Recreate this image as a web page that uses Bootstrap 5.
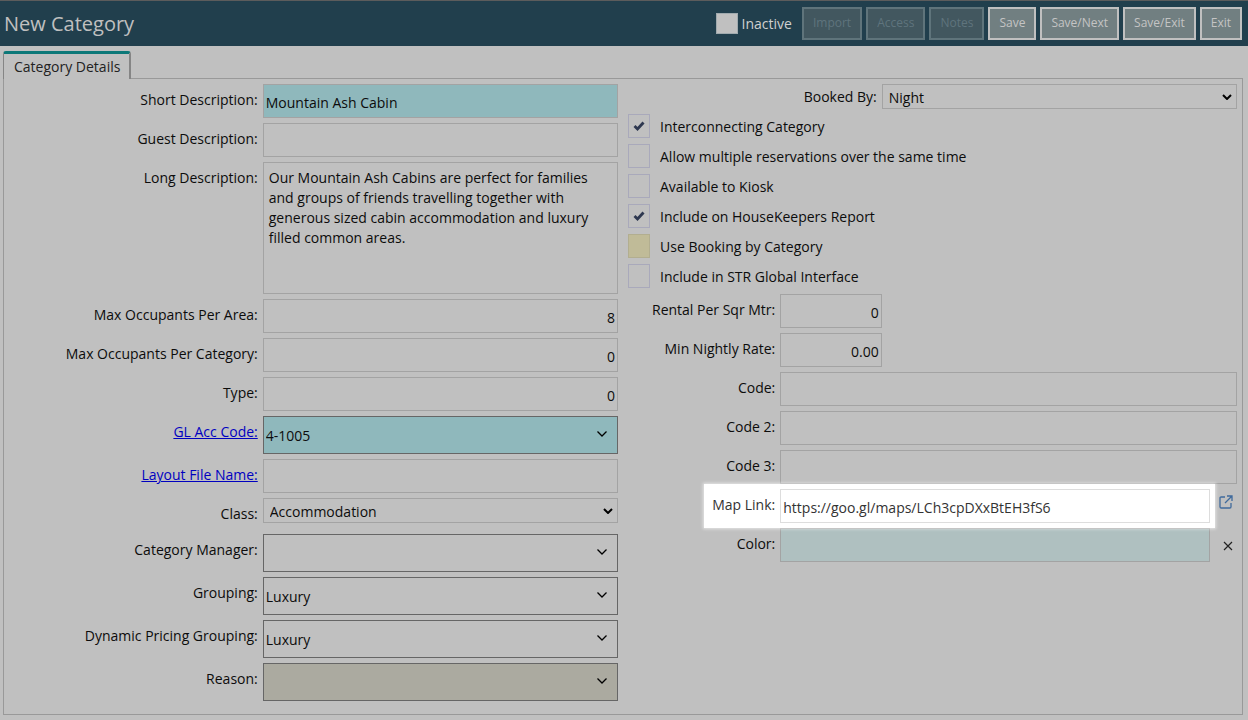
<!DOCTYPE html>
<html lang="en">
<head>
<meta charset="utf-8">
<meta name="viewport" content="width=device-width, initial-scale=1">
<title>New Category</title>
<link href="https://cdn.jsdelivr.net/npm/bootstrap@5.3.0/dist/css/bootstrap.min.css" rel="stylesheet">
<style>
  :root { --page: #c0c0c0; --line: #a3a3a3; --gap: 5px; }
  body { background: var(--page); color: #0c0c0c; font: 14px/20px "Open Sans", sans-serif; }
  a { color: #0000c0; }

  /* title bar */
  .titlebar { background: #213f4d; border-top: 1px solid #5c5c5c; color: var(--page); padding: 6px 6px 6px 4px; }
  .titlebar h1 { font-size: 20px; line-height: 32px; font-weight: 400; }
  .tool-group { gap: 4px; }
  .tool-label { margin-right: 6px; color: #d0d0d0; }
  .btn-tool { --bs-btn-font-size: 12px; --bs-btn-line-height: 16px; --bs-btn-padding-x: 9px; --bs-btn-padding-y: 6px;
    --bs-btn-border-width: 2px; --bs-btn-border-radius: 0; --bs-btn-color: #c4c4c4; --bs-btn-bg: #717f81; --bs-btn-border-color: #c0c0c0;
    --bs-btn-hover-color: #fff; --bs-btn-hover-bg: #7d8b8d; --bs-btn-hover-border-color: #d0d0d0;
    --bs-btn-disabled-color: #5f747d; --bs-btn-disabled-bg: #42575f; --bs-btn-disabled-border-color: #5f747b; --bs-btn-disabled-opacity: 1;
    padding-bottom: 7px; }

  /* tabs and pane */
  .tab-strip { padding: 5px 3px 0; --bs-nav-tabs-border-width: 0; }
  .tab-strip .nav-link.active { border: 1px solid #858585; border-width: 3px 2px 0 1px; border-top-color: #0c7878;
    border-radius: 3px 3px 0 0; background: var(--page); color: #222; padding: 3px 9px 2px 10px; margin-bottom: -1px; position: relative; z-index: 1; }
  .pane { margin: 0 5px 5px 3px; border: 1px solid #999; padding-bottom: 8px; }
  .stack { padding: var(--gap); gap: var(--gap); }

  /* fields */
  .field-label { padding: 6px 5px 0 0; text-align: right; }
  .form-control, .form-select { font-size: 14px; line-height: 20px; color: #0c0c0c; border: 1px solid var(--line); border-radius: 0; background-color: transparent; }
  .form-control { height: 34px; padding: 6px 2px; }
  input.form-control { padding: 7px 2px 5px; line-height: 18px; }
  textarea.form-control { height: 132px; padding: 5px; resize: none; }
  .form-select { height: 25px; padding: 3px 20px 0 6px; background-size: 10px 6px; background-position: right 4px top 9px;
    background-image: url("data:image/svg+xml,%3Csvg xmlns='http://www.w3.org/2000/svg' viewBox='0 0 10 6'%3E%3Cpath d='M1 1l4 4 4-4' fill='none' stroke='%23000' stroke-width='2'/%3E%3C/svg%3E"); }
  .combo { height: 38px; padding: 9px 30px 7px 2px; border-color: #666; background-position: right 10px top 14px;
    background-image: url("data:image/svg+xml,%3Csvg xmlns='http://www.w3.org/2000/svg' viewBox='0 0 10 6'%3E%3Cpath d='M.5.5L5 5 9.500.5' fill='none' stroke='%23000' stroke-width='1.300'/%3E%3C/svg%3E"); }
  .is-required { background-color: #8fb8bc; }
  .is-locked { background-color: #abaaa0; }
  .short-row { min-height: 31px; }

  /* tick boxes */
  .tick { appearance: none; flex: none; margin: 0; width: 22px; height: 24px; border: 1px solid #a9a9bb; background: center / 12px 10px no-repeat; }
  .tick:checked { background-image: url("data:image/svg+xml,%3Csvg xmlns='http://www.w3.org/2000/svg' viewBox='0 0 12 10'%3E%3Cpath d='M1.500 5L4.500 8 10.500 1.500' fill='none' stroke='%232e3850' stroke-width='2.800'/%3E%3C/svg%3E"); }
  .tick-khaki { background-color: #c0bb98; border-color: #b2ae90; }
  .tick-inactive { height: 21px; background-color: #c0c0c0; border-color: #a0aaae; }
  .tick-row { gap: 10px; padding-bottom: 1px; }
  .tick-row label { padding-top: 2px; }
  .tick-list { gap: var(--gap); }

  /* spotlighted row */
  .spot { position: relative; color: #333; }
  .spot::before { content: ""; position: absolute; inset: -5px 22px -5px 76px; background: #fff; box-shadow: 0 0 3px 1px rgba(255, 255, 255, .6); }
  .spot > * { position: relative; }
  .spot .form-control { border-color: #ddd; color: #333; }
  .swatch { background-color: #afc0c0; padding: 0; }
  .side-tool { width: 27px; height: 34px; flex: none; border: 0; background: none; padding: 0 0 0 8px; text-align: center; line-height: 1; }
  a.side-tool { padding: 5px 0 0 5px; }
</style>
</head>
<body>
<header class="titlebar d-flex align-items-center justify-content-between">
  <h1 class="m-0">New Category</h1>
  <div class="tool-group d-flex align-items-center">
    <input class="tick tick-inactive" type="checkbox" id="inactive">
    <label for="inactive" class="tool-label">Inactive</label>
    <button type="button" class="btn btn-tool" disabled>Import</button>
    <button type="button" class="btn btn-tool" disabled>Access</button>
    <button type="button" class="btn btn-tool" disabled>Notes</button>
    <button type="button" class="btn btn-tool">Save</button>
    <button type="button" class="btn btn-tool">Save/Next</button>
    <button type="button" class="btn btn-tool">Save/Exit</button>
    <button type="button" class="btn btn-tool">Exit</button>
  </div>
</header>

<ul class="nav nav-tabs tab-strip">
  <li class="nav-item"><a class="nav-link active" href="#details">Category Details</a></li>
</ul>

<main class="pane" id="details">
  <form class="row g-0">
    <div class="col-6 stack d-flex flex-column">
      <div class="row g-0"><label class="col-5 field-label" for="short">Short Description:</label><div class="col-7"><input class="form-control is-required" id="short" type="text" value="Mountain Ash Cabin"></div></div>
      <div class="row g-0"><label class="col-5 field-label" for="guest">Guest Description:</label><div class="col-7"><input class="form-control" id="guest" type="text"></div></div>
      <div class="row g-0"><label class="col-5 field-label" for="long">Long Description:</label><div class="col-7"><textarea class="form-control d-block" id="long">Our Mountain Ash Cabins are perfect for families and groups of friends travelling together with generous sized cabin accommodation and luxury filled common areas.</textarea></div></div>
      <div class="row g-0"><label class="col-5 field-label" for="maxarea">Max Occupants Per Area:</label><div class="col-7"><input class="form-control text-end" id="maxarea" type="text" value="8"></div></div>
      <div class="row g-0"><label class="col-5 field-label" for="maxcat">Max Occupants Per Category:</label><div class="col-7"><input class="form-control text-end" id="maxcat" type="text" value="0"></div></div>
      <div class="row g-0"><label class="col-5 field-label" for="type">Type:</label><div class="col-7"><input class="form-control text-end" id="type" type="text" value="0"></div></div>
      <div class="row g-0"><label class="col-5 field-label" for="gl"><a href="#gl">GL Acc Code:</a></label><div class="col-7"><select class="form-select combo is-required" id="gl"><option>4-1005</option></select></div></div>
      <div class="row g-0"><label class="col-5 field-label" for="layout"><a href="#layout">Layout File Name:</a></label><div class="col-7"><input class="form-control" id="layout" type="text"></div></div>
      <div class="row g-0 short-row"><label class="col-5 field-label" for="class">Class:</label><div class="col-7"><select class="form-select" id="class"><option>Accommodation</option></select></div></div>
      <div class="row g-0"><label class="col-5 field-label" for="manager">Category Manager:</label><div class="col-7"><select class="form-select combo" id="manager"><option></option></select></div></div>
      <div class="row g-0"><label class="col-5 field-label" for="grouping">Grouping:</label><div class="col-7"><select class="form-select combo" id="grouping"><option>Luxury</option></select></div></div>
      <div class="row g-0"><label class="col-5 field-label" for="dynamic">Dynamic Pricing Grouping:</label><div class="col-7"><select class="form-select combo" id="dynamic"><option>Luxury</option></select></div></div>
      <div class="row g-0"><label class="col-5 field-label" for="reason">Reason:</label><div class="col-7"><select class="form-select combo is-locked" id="reason"><option></option></select></div></div>
    </div>

    <div class="col-6 stack d-flex flex-column">
      <div class="row g-0 align-items-center"><label class="col-5 field-label pt-0" for="booked">Booked By:</label><div class="col-7"><select class="form-select" id="booked"><option>Night</option></select></div></div>
      <div class="tick-list d-flex flex-column">
        <div class="tick-row d-flex align-items-center"><input class="tick" type="checkbox" id="t1" checked><label for="t1">Interconnecting Category</label></div>
        <div class="tick-row d-flex align-items-center"><input class="tick" type="checkbox" id="t2"><label for="t2">Allow multiple reservations over the same time</label></div>
        <div class="tick-row d-flex align-items-center"><input class="tick" type="checkbox" id="t3"><label for="t3">Available to Kiosk</label></div>
        <div class="tick-row d-flex align-items-center"><input class="tick" type="checkbox" id="t4" checked><label for="t4">Include on HouseKeepers Report</label></div>
        <div class="tick-row d-flex align-items-center"><input class="tick tick-khaki" type="checkbox" id="t5"><label for="t5">Use Booking by Category</label></div>
        <div class="tick-row d-flex align-items-center"><input class="tick" type="checkbox" id="t6"><label for="t6">Include in STR Global Interface</label></div>
      </div>
      <div class="row g-0"><label class="col-3 field-label" for="rental">Rental Per Sqr Mtr:</label><div class="col-2"><input class="form-control text-end" id="rental" type="text" value="0"></div></div>
      <div class="row g-0"><label class="col-3 field-label" for="rate">Min Nightly Rate:</label><div class="col-2"><input class="form-control text-end" id="rate" type="text" value="0.00"></div></div>
      <div class="row g-0"><label class="col-3 field-label" for="code1">Code:</label><div class="col-9"><input class="form-control" id="code1" type="text"></div></div>
      <div class="row g-0"><label class="col-3 field-label" for="code2">Code 2:</label><div class="col-9"><input class="form-control" id="code2" type="text"></div></div>
      <div class="row g-0"><label class="col-3 field-label" for="code3">Code 3:</label><div class="col-9"><input class="form-control" id="code3" type="text"></div></div>
      <div class="row g-0 spot">
        <label class="col-3 field-label" for="map">Map Link:</label>
        <div class="col-9 d-flex">
          <input class="form-control" id="map" type="text" value="https://goo.gl/maps/LCh3cpDXxBtEH3fS6">
          <a class="side-tool" href="#map" aria-label="Open map">
            <svg width="14" height="14" viewBox="0 0 14 14" fill="none" stroke="#3f6a9c" stroke-width="1.300"><path d="M6 2H2.200Q1 2 1 3.200V11.800Q1 13 2.200 13H10.800Q12 13 12 11.800V8M8 1H13V6M13 1L6 8"/></svg>
          </a>
        </div>
      </div>
      <div class="row g-0">
        <label class="col-3 field-label" for="color">Color:</label>
        <div class="col-9 d-flex">
          <input class="form-control swatch" id="color" type="text">
          <button type="button" class="side-tool" aria-label="Clear color">
            <svg width="10" height="10" viewBox="0 0 10 10" stroke="#222" stroke-width="1.200"><path d="M1 1L9 9M9 1L1 9"/></svg>
          </button>
        </div>
      </div>
    </div>
  </form>
</main>
<script src="https://cdn.jsdelivr.net/npm/bootstrap@5.3.0/dist/js/bootstrap.bundle.min.js"></script>
</body>
</html>
